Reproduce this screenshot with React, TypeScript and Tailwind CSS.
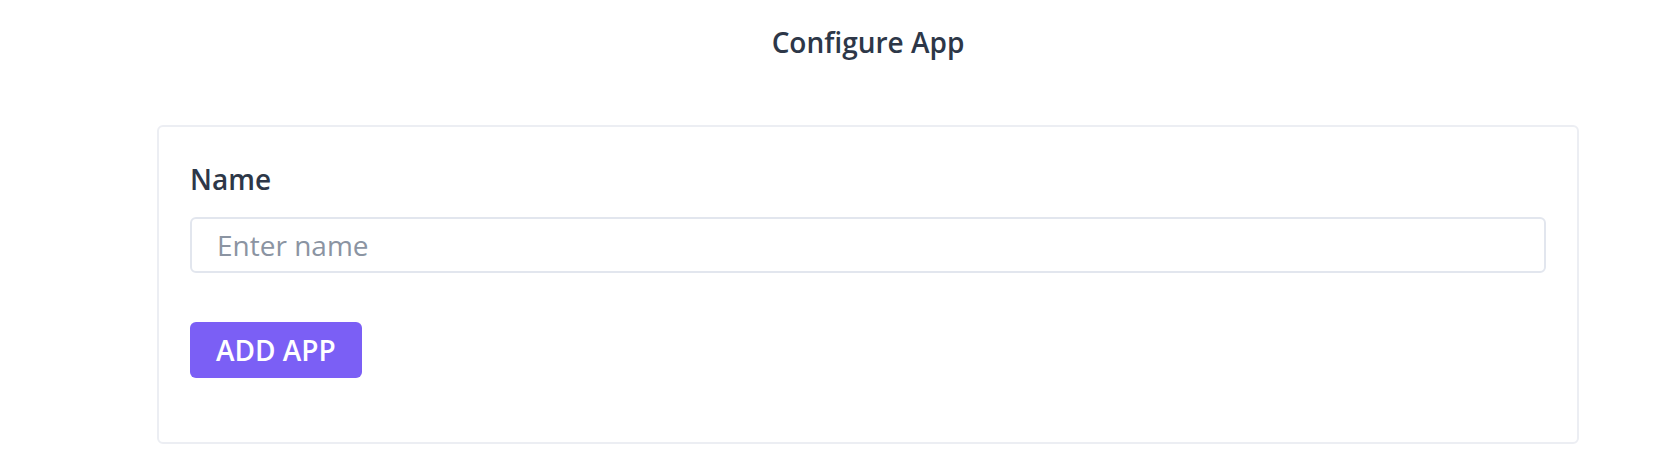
import React, { useState } from 'react';

const App = () => {
  const [name, setName] = useState('');

  return (
    <div className="min-h-screen bg-white" style={{ fontFamily: '"Open Sans", "Noto Sans", sans-serif' }}>
      <div className="ml-[157px] w-[1422px] pt-[23px]">
        {/* Page title */}
        <h1 className="text-center text-[28px] leading-[38px] font-semibold text-[#2d3748]">Configure App</h1>

        {/* Form card */}
        <div className="mt-[64px] rounded-md border-2 border-[#eceef3] bg-white px-[31px] pt-[33px] pb-[64px]">
          <label className="block text-[28px] leading-[38px] font-semibold text-[#2d3748]">Name</label>
          <input
            value={name}
            onChange={(e) => setName(e.target.value)}
            placeholder="Enter name"
            className="mt-[19px] block h-[56px] w-full rounded-md border-2 border-[#e2e6ee] bg-white px-[25px] text-[28px] leading-[38px] text-[#2d3748] placeholder:text-[#8b94a2] outline-none"
          />
          <button className="mt-[49px] flex h-[56px] items-center rounded-md bg-[#7b5ff5] px-[26px] text-[28px] font-semibold text-white">
            ADD APP
          </button>
        </div>
      </div>
    </div>
  );
};

export default App;
